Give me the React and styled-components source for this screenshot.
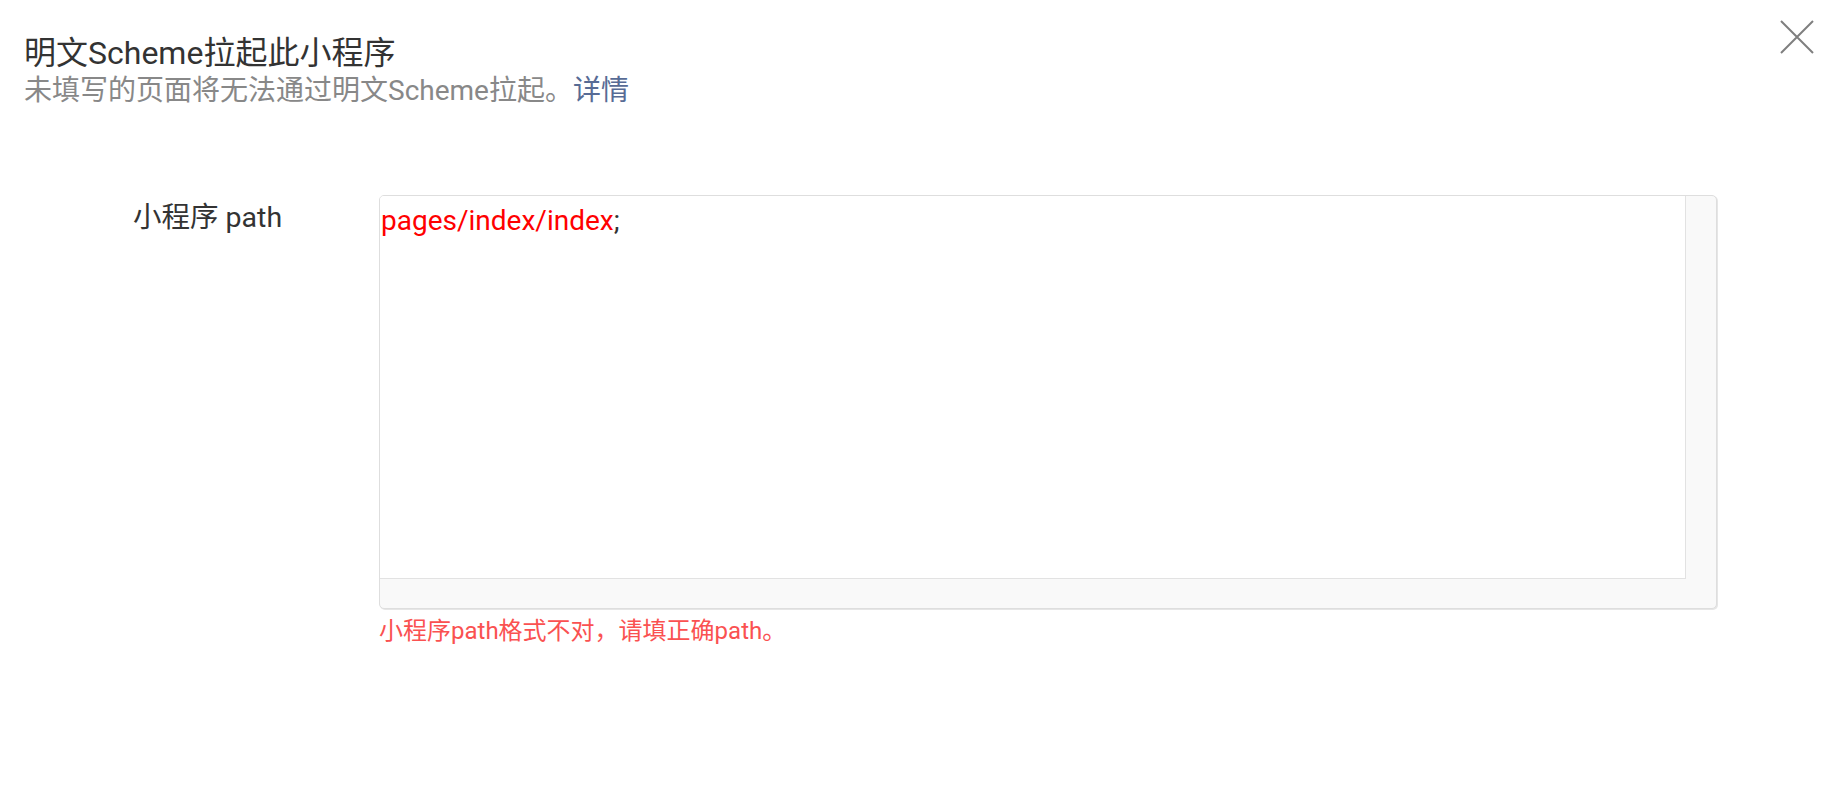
import React from 'react';
import styled, { createGlobalStyle } from 'styled-components';

const GlobalStyle = createGlobalStyle`
  html, body {
    margin: 0;
    padding: 0;
    background: #ffffff;
  }
  body {
    font-family: Roboto, "Noto Sans CJK SC", sans-serif;
    color: #333333;
  }
`;

// Dialog shell
const Dialog = styled.div`
  position: relative;
  width: 1845px;
  height: 785px;
  box-sizing: border-box;
  padding: 33px 24px 0 24px;
  background: #ffffff;
`;

const CloseButton = styled.button`
  position: absolute;
  top: 20px;
  right: 31px;
  width: 34px;
  height: 34px;
  padding: 0;
  border: none;
  background: transparent;
  cursor: pointer;
  display: flex;
  align-items: center;
  justify-content: center;
`;

const Header = styled.div`
  display: flex;
  flex-direction: column;
`;

const Title = styled.h2`
  margin: 0;
  font-size: 32px;
  line-height: 40px;
  font-weight: 400;
  color: #333333;
`;

const Subtitle = styled.p`
  margin: 0;
  font-size: 28px;
  line-height: 36px;
  color: #888888;
`;

const Link = styled.a`
  color: #576b95;
  text-decoration: none;
  cursor: pointer;
`;

// Form
const Form = styled.div`
  margin-top: 86px;
  padding-left: 109px;
`;

const Row = styled.div`
  display: grid;
  grid-template-columns: 246px 1338px;
  align-items: start;
`;

const Label = styled.label`
  font-size: 28.5px;
  line-height: 46px;
  color: #333333;
`;

const Field = styled.div`
  display: flex;
  flex-direction: column;
`;

const Frame = styled.div`
  box-sizing: border-box;
  height: 414px;
  border: 1px solid #dedede;
  border-radius: 5px;
  box-shadow: 1px 1px 0 #e6e6e6;
  background: #f9f9f9;
  padding: 0 30px 29px 0;
  overflow: hidden;
`;

const Editor = styled.div`
  height: 100%;
  box-sizing: border-box;
  background: #ffffff;
  border-right: 1px solid #e2e2e2;
  border-bottom: 1px solid #e2e2e2;
  padding: 4px 0 0 1px;
  font-size: 28px;
  line-height: 42px;
  color: #333333;
  white-space: pre;
`;

const Invalid = styled.span`
  color: #ff0000;
`;

const ErrorText = styled.div`
  margin-top: 5px;
  font-size: 24px;
  line-height: 34px;
  color: #fa5151;
`;

const CloseIcon = () => (
  <svg width="34" height="34" viewBox="0 0 34 34">
    <path d="M1 1 L33 33 M33 1 L1 33" stroke="#7f7f7f" strokeWidth="2" fill="none" />
  </svg>
);

const App = () => {
  return (
    <>
      <GlobalStyle />
      <Dialog>
        <CloseButton aria-label="关闭">
          <CloseIcon />
        </CloseButton>
        <Header>
          <Title>明文Scheme拉起此小程序</Title>
          <Subtitle>
            未填写的页面将无法通过明文Scheme拉起。<Link>详情</Link>
          </Subtitle>
        </Header>
        <Form>
          <Row>
            <Label>小程序 path</Label>
            <Field>
              <Frame>
                <Editor>
                  <Invalid>pages/index/index</Invalid>;
                </Editor>
              </Frame>
              <ErrorText>小程序path格式不对，请填正确path。</ErrorText>
            </Field>
          </Row>
        </Form>
      </Dialog>
    </>
  );
};

export default App;
